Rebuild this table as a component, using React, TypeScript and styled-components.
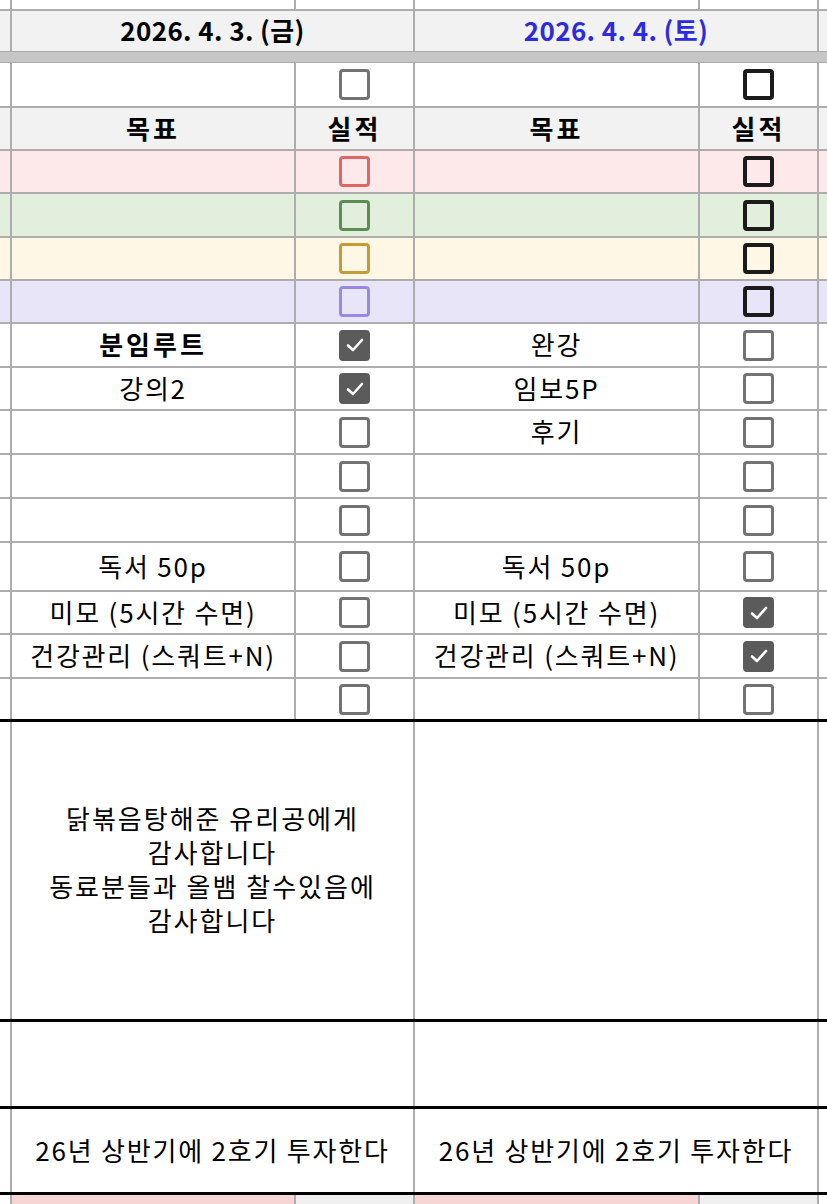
import styled, { createGlobalStyle } from 'styled-components'

const GlobalStyle = createGlobalStyle`
  html, body {
    margin: 0;
    padding: 0;
    background: #fff;
  }
  body {
    font-family: 'Noto Sans CJK KR', 'Noto Sans', sans-serif;
    color: #000;
  }
  * {
    box-sizing: border-box;
  }
`

const GRID = '#adadad'

type Edge = 'grid' | 'thick' | 'none'

const Sheet = styled.div`
  width: 827px;
  height: 1204px;
  overflow: hidden;
  display: flex;
  flex-direction: column;
`

const Row = styled.div<{ $h: number; $bg?: string; $edge?: Edge }>`
  display: grid;
  grid-template-columns: 12px 284px 119px 285px 119px 1fr;
  flex: 0 0 ${(p) => p.$h}px;
  height: ${(p) => p.$h}px;
  background: ${(p) => p.$bg ?? '#fff'};
  border-bottom: ${(p) =>
    p.$edge === 'thick'
      ? '3px solid #000'
      : p.$edge === 'none'
      ? 'none'
      : `2px solid ${GRID}`};
`

const Band = styled.div`
  flex: 0 0 12px;
  background: #c6c6c6;
  border-top: 1px solid #a9a9a9;
  border-bottom: 1px solid #a9a9a9;
`

const Cell = styled.div<{
  $span?: number
  $last?: boolean
  $bg?: string
  $bold?: boolean
  $title?: boolean
  $color?: string
}>`
  grid-column: span ${(p) => p.$span ?? 1};
  border-right: ${(p) => (p.$last ? 'none' : `2px solid ${GRID}`)};
  background: ${(p) => p.$bg ?? 'transparent'};
  display: flex;
  align-items: center;
  justify-content: center;
  padding-bottom: 3px;
  font-size: 26px;
  font-weight: ${(p) => (p.$bold || p.$title ? 700 : 400)};
  letter-spacing: ${(p) => (p.$title ? '0.4px' : p.$bold ? '3px' : '1.8px')};
  color: ${(p) => p.$color ?? '#000'};
  white-space: nowrap;
  overflow: hidden;
`

const Note = styled.div`
  text-align: center;
  font-size: 26px;
  letter-spacing: 2px;
  line-height: 34px;
  white-space: pre-line;
`

type Tone = 'gray' | 'black' | 'red' | 'green' | 'gold' | 'purple'

const toneColor: Record<Tone, string> = {
  gray: '#727272',
  black: '#1b1b1b',
  red: '#e06666',
  green: '#5e8c55',
  gold: '#c49c35',
  purple: '#9a89e4',
}

const Box = styled.span<{ $tone: Tone; $checked?: boolean }>`
  width: 31px;
  height: 31px;
  margin-top: 3px;
  border-radius: 4px;
  border: ${(p) => (p.$tone === 'black' ? 4 : 3)}px solid
    ${(p) => (p.$checked ? '#5b5b5b' : toneColor[p.$tone])};
  background: ${(p) => (p.$checked ? '#5b5b5b' : 'transparent')};
  display: flex;
  align-items: center;
  justify-content: center;
`

const Check = ({ tone = 'gray', checked }: { tone?: Tone; checked?: boolean }) => (
  <Box $tone={tone} $checked={checked}>
    {checked && (
      <svg width="22" height="22" viewBox="0 0 22 22">
        <polyline
          points="4,11.5 9,16 18,6"
          fill="none"
          stroke="#fff"
          strokeWidth="2.6"
          strokeLinecap="round"
          strokeLinejoin="round"
        />
      </svg>
    )}
  </Box>
)

const colorRows: { h: number; bg: string; tone: Tone }[] = [
  { h: 43, bg: '#fde9e9', tone: 'red' },
  { h: 44, bg: '#e3efdd', tone: 'green' },
  { h: 43, bg: '#fff7e5', tone: 'gold' },
  { h: 43, bg: '#e8e5f8', tone: 'purple' },
]

type Task = {
  h: number
  left?: string
  leftBold?: boolean
  leftDone?: boolean
  right?: string
  rightDone?: boolean
  edge?: Edge
}

const tasks: Task[] = [
  { h: 44, left: '분임루트', leftBold: true, leftDone: true, right: '완강' },
  { h: 43, left: '강의2', leftDone: true, right: '임보5P' },
  { h: 44, right: '후기' },
  { h: 44 },
  { h: 44 },
  { h: 49, left: '독서 50p', right: '독서 50p' },
  { h: 43, left: '미모 (5시간 수면)', right: '미모 (5시간 수면)', rightDone: true },
  { h: 44, left: '건강관리 (스쿼트+N)', right: '건강관리 (스쿼트+N)', rightDone: true },
  { h: 43, edge: 'thick' },
]

export default function App() {
  return (
    <>
      <GlobalStyle />
      <Sheet>
        <Row $h={11}>
          <Cell />
          <Cell />
          <Cell />
          <Cell />
          <Cell />
          <Cell $last />
        </Row>

        <Row $h={40} $bg="#f2f2f2" $edge="none">
          <Cell />
          <Cell $span={2} $title>
            2026. 4. 3. (금)
          </Cell>
          <Cell $span={2} $title $color="#2b2be0">
            2026. 4. 4. (토)
          </Cell>
          <Cell $last />
        </Row>
        <Band />

        <Row $h={45}>
          <Cell />
          <Cell />
          <Cell>
            <Check />
          </Cell>
          <Cell />
          <Cell>
            <Check tone="black" />
          </Cell>
          <Cell $last />
        </Row>

        <Row $h={43} $bg="#f2f2f2">
          <Cell />
          <Cell $bold>목표</Cell>
          <Cell $bold>실적</Cell>
          <Cell $bold>목표</Cell>
          <Cell $bold>실적</Cell>
          <Cell $last />
        </Row>

        {colorRows.map((r) => (
          <Row key={r.tone} $h={r.h} $bg={r.bg}>
            <Cell />
            <Cell />
            <Cell>
              <Check tone={r.tone} />
            </Cell>
            <Cell />
            <Cell>
              <Check tone="black" />
            </Cell>
            <Cell $last />
          </Row>
        ))}

        {tasks.map((t, i) => (
          <Row key={i} $h={t.h} $edge={t.edge}>
            <Cell />
            <Cell $bold={t.leftBold}>{t.left}</Cell>
            <Cell>
              <Check checked={t.leftDone} />
            </Cell>
            <Cell>{t.right}</Cell>
            <Cell>
              <Check checked={t.rightDone} />
            </Cell>
            <Cell $last />
          </Row>
        ))}

        <Row $h={300} $edge="thick">
          <Cell />
          <Cell $span={2}>
            <Note>
              {'닭볶음탕해준 유리공에게\n감사합니다\n동료분들과 올뱀 찰수있음에\n감사합니다'}
            </Note>
          </Cell>
          <Cell $span={2} />
          <Cell $last />
        </Row>

        <Row $h={87} $edge="thick">
          <Cell />
          <Cell $span={2} />
          <Cell $span={2} />
          <Cell $last />
        </Row>

        <Row $h={86} $edge="thick">
          <Cell />
          <Cell $span={2}>26년 상반기에 2호기 투자한다</Cell>
          <Cell $span={2}>26년 상반기에 2호기 투자한다</Cell>
          <Cell $last />
        </Row>

        <Row $h={20} $edge="none">
          <Cell />
          <Cell $bg="#f8d5d5" />
          <Cell $bg="#f0f0f0" />
          <Cell $bg="#f8d5d5" />
          <Cell $bg="#f0f0f0" />
          <Cell $last />
        </Row>
      </Sheet>
    </>
  )
}
